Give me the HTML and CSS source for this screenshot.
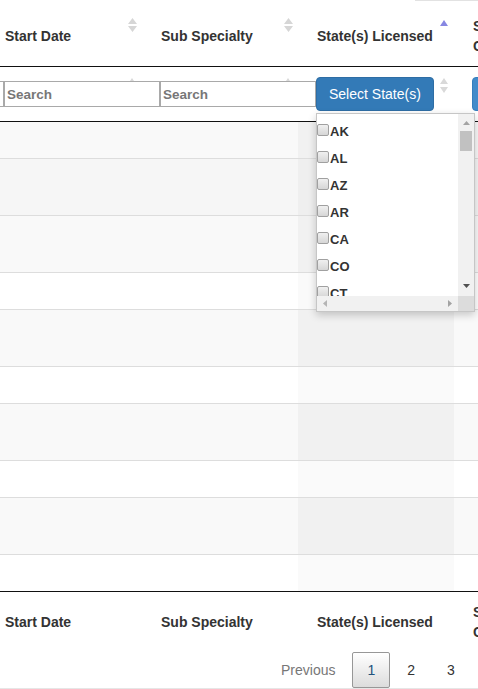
FILE: index.html
```html
<!DOCTYPE html>
<html lang="en">
<head>
<meta charset="utf-8">
<title>Licensing table</title>
<link rel="stylesheet" href="styles.css">
</head>
<body>
<div class="top"><div class="top-line"></div></div>
<div class="viewport">
  <div class="dt">
    <div class="row head">
      <div class="cell">Specialty<svg class="sort" width="9" height="14" viewBox="0 0 9 14"><path d="M0 6L4.5 0L9 6Z M0 8L9 8L4.5 14Z"/></svg></div>
      <div class="cell">Start Date<svg class="sort" width="9" height="14" viewBox="0 0 9 14"><path d="M0 6L4.5 0L9 6Z M0 8L9 8L4.5 14Z"/></svg></div>
      <div class="cell">Sub Specialty<svg class="sort" width="9" height="14" viewBox="0 0 9 14"><path d="M0 6L4.5 0L9 6Z M0 8L9 8L4.5 14Z"/></svg></div>
      <div class="cell">State(s) Licensed<svg class="sort-asc" width="8" height="6" viewBox="0 0 8 6"><path d="M0 6L4 0L8 6Z"/></svg></div>
      <div class="cell">Specialty Certification<svg class="sort" width="9" height="14" viewBox="0 0 9 14"><path d="M0 6L4.5 0L9 6Z M0 8L9 8L4.5 14Z"/></svg></div>
    </div>
    <div class="row filter">
      <div class="cell"><input class="search" type="text" placeholder="Search"><svg class="fsort" width="8" height="15" viewBox="0 0 8 15"><path d="M0 6L4 0L8 6Z M0 9L8 9L4 15Z"/></svg></div>
      <div class="cell"><input class="search" type="text" placeholder="Search"><svg class="fsort" width="8" height="15" viewBox="0 0 8 15"><path d="M0 6L4 0L8 6Z M0 9L8 9L4 15Z"/></svg></div>
      <div class="cell"><input class="search" type="text" placeholder="Search"><svg class="fsort" width="8" height="15" viewBox="0 0 8 15"><path d="M0 6L4 0L8 6Z M0 9L8 9L4 15Z"/></svg></div>
      <div class="cell">
        <button class="btn" type="button">Select State(s)</button>
        <svg class="fsort" width="8" height="15" viewBox="0 0 8 15"><path d="M0 6L4 0L8 6Z M0 9L8 9L4 15Z"/></svg>
        <div class="dd">
          <div class="dd-list">
            <label class="opt"><input type="checkbox">AK</label>
            <label class="opt"><input type="checkbox">AL</label>
            <label class="opt"><input type="checkbox">AZ</label>
            <label class="opt"><input type="checkbox">AR</label>
            <label class="opt"><input type="checkbox">CA</label>
            <label class="opt"><input type="checkbox">CO</label>
            <label class="opt"><input type="checkbox">CT</label>
            <label class="opt"><input type="checkbox">DE</label>
          </div>
          <div class="vbar">
            <svg class="arr-up" width="7" height="4" viewBox="0 0 7 4"><path d="M0 4L3.5 0L7 4Z"/></svg>
            <div class="thumb"></div>
            <svg class="arr-down" width="7" height="4" viewBox="0 0 7 4"><path d="M0 0L7 0L3.5 4Z"/></svg>
          </div>
          <div class="hbar">
            <svg class="arr-left" width="4" height="7" viewBox="0 0 4 7"><path d="M4 0L4 7L0 3.5Z"/></svg>
            <svg class="arr-right" width="4" height="7" viewBox="0 0 4 7"><path d="M0 0L4 3.5L0 7Z"/></svg>
          </div>
          <div class="corner"></div>
        </div>
      </div>
      <div class="cell"><button class="btn btn-alt" type="button">Select Certification</button></div>
    </div>
    <div class="row body short odd"><div class="cell"></div><div class="cell"></div><div class="cell"></div><div class="cell s"></div><div class="cell"></div></div>
    <div class="row body tall hover"><div class="cell"></div><div class="cell"></div><div class="cell"></div><div class="cell s"></div><div class="cell"></div></div>
    <div class="row body tall odd"><div class="cell"></div><div class="cell"></div><div class="cell"></div><div class="cell s"></div><div class="cell"></div></div>
    <div class="row body short even"><div class="cell"></div><div class="cell"></div><div class="cell"></div><div class="cell s"></div><div class="cell"></div></div>
    <div class="row body tall odd"><div class="cell"></div><div class="cell"></div><div class="cell"></div><div class="cell s"></div><div class="cell"></div></div>
    <div class="row body short even"><div class="cell"></div><div class="cell"></div><div class="cell"></div><div class="cell s"></div><div class="cell"></div></div>
    <div class="row body tall odd"><div class="cell"></div><div class="cell"></div><div class="cell"></div><div class="cell s"></div><div class="cell"></div></div>
    <div class="row body short even"><div class="cell"></div><div class="cell"></div><div class="cell"></div><div class="cell s"></div><div class="cell"></div></div>
    <div class="row body tall odd"><div class="cell"></div><div class="cell"></div><div class="cell"></div><div class="cell s"></div><div class="cell"></div></div>
    <div class="row body last even"><div class="cell"></div><div class="cell"></div><div class="cell"></div><div class="cell s"></div><div class="cell"></div></div>
    <div class="row foot">
      <div class="cell">Specialty</div>
      <div class="cell">Start Date</div>
      <div class="cell">Sub Specialty</div>
      <div class="cell">State(s) Licensed</div>
      <div class="cell">Specialty Certification</div>
    </div>
  </div>
  <div class="pager">
    <span class="pbtn disabled">Previous</span>
    <span class="pbtn current">1</span>
    <span class="pbtn">2</span>
    <span class="pbtn">3</span>
    <span class="pbtn">4</span>
    <span class="pbtn">5</span>
    <span class="pbtn">Next</span>
  </div>
  <div class="bottom-line"></div>
</div>
</body>
</html>
```
FILE: styles.css
```css
* { box-sizing: border-box; }
html, body { margin: 0; padding: 0; }
body {
  font-family: "Liberation Sans", Arial, sans-serif;
  font-size: 14px;
  line-height: 20px;
  color: #333;
  background: #fff;
  width: 478px;
  height: 689px;
  overflow: hidden;
}
.top { height: 6px; }
.top-line { margin-left: 415px; height: 1px; background: #e2e2e2; }
.viewport { width: 478px; overflow: hidden; }
.dt { margin-left: -170px; width: 780px; }
.row { display: grid; grid-template-columns: repeat(5, 156px); }
.cell {
  position: relative;
  padding: 0 18px;
  display: flex;
  align-items: center;
}
.head { height: 61px; border-bottom: 1px solid #111; }
.head .cell, .foot .cell { font-weight: bold; padding-left: 19px; }
.sort { position: absolute; right: 5px; top: 12px; fill: #d6d6d6; }
.sort-asc { position: absolute; right: 6px; top: 14px; fill: #8787e2; }
.filter { height: 55px; border-bottom: 1px solid #111; }
.fsort { position: absolute; right: 6px; top: 11px; fill: #d9d9d9; }
.search {
  position: relative;
  z-index: 1;
  flex-shrink: 0;
  width: 156px;
  height: 26px;
  margin: 0;
  padding: 1px 2px;
  border: 1px solid #a9a9a9;
  background: #fff;
  font-family: "Liberation Sans", Arial, sans-serif;
  font-size: 13.5px;
  font-weight: bold;
  color: #333;
}
.search::placeholder { color: #777; font-weight: bold; }
.btn {
  flex-shrink: 0;
  margin: 0;
  padding: 6px 12px;
  border: 1px solid #2e6da4;
  border-radius: 4px;
  background: #337ab7;
  color: #fff;
  font-family: "Liberation Sans", Arial, sans-serif;
  font-size: 14px;
  line-height: 20px;
  white-space: nowrap;
}
.btn-alt { background: #428bca; border-color: #357ebd; }
.dd {
  position: absolute;
  left: 18px;
  top: 46px;
  width: 159px;
  height: 199px;
  border: 1px solid #c6c6c6;
  background: #fff;
  box-shadow: 0 3px 8px rgba(0, 0, 0, 0.2);
  z-index: 5;
  display: grid;
  grid-template-columns: 141px 16px;
  grid-template-rows: 182px 15px;
}
.dd-list { overflow: hidden; padding-top: 4px; font-size: 13px; }
.opt {
  display: block;
  height: 27px;
  line-height: 27px;
  font-size: 13px;
  font-weight: bold;
  color: #333;
  white-space: nowrap;
}
.opt input {
  appearance: none;
  -webkit-appearance: none;
  display: inline-block;
  width: 12px;
  height: 12px;
  margin: 0 1px 0 0;
  border: 1px solid #a0a0a0;
  border-radius: 2px;
  background: linear-gradient(#f0f0f0, #d6d6d6);
  vertical-align: baseline;
}
.vbar { position: relative; background: #f1f1f1; }
.arr-up { position: absolute; left: 5px; top: 7px; fill: #a3a3a3; }
.thumb { position: absolute; left: 2px; width: 12px; top: 17px; height: 20px; background: #c1c1c1; }
.arr-down { position: absolute; left: 5px; top: 170px; fill: #505050; }
.hbar {
  background: #f1f1f1;
  display: flex;
  align-items: center;
  justify-content: space-between;
  padding: 0 6px;
}
.arr-left { fill: #b5b5b5; }
.arr-right { fill: #a3a3a3; }
.corner { background: #dcdcdc; }
.body { border-bottom: 1px solid #ddd; }
.body.short { height: 37px; }
.body.tall { height: 57px; }
.body.last { height: 36px; border-bottom: 0; }
.odd { background: #f9f9f9; }
.odd .s { background: #f1f1f1; }
.even { background: #fff; }
.even .s { background: #fafafa; }
.hover { background: #f6f6f6; }
.hover .s { background: #efefef; }
.foot { height: 61px; border-top: 1px solid #111; }
.pager {
  display: flex;
  padding-left: 264px;
  height: 36px;
  white-space: nowrap;
}
.pbtn {
  flex-shrink: 0;
  margin-left: 2px;
  padding: 7px 14px;
  border: 1px solid transparent;
  border-radius: 2px;
  line-height: 20px;
  color: #333;
}
.pbtn.disabled { color: #777; }
.pbtn.current {
  border-color: #979797;
  background: linear-gradient(#fff, #dcdcdc);
  color: #23527c;
}
.bottom-line { height: 1px; background: #e6e6e6; }
```
